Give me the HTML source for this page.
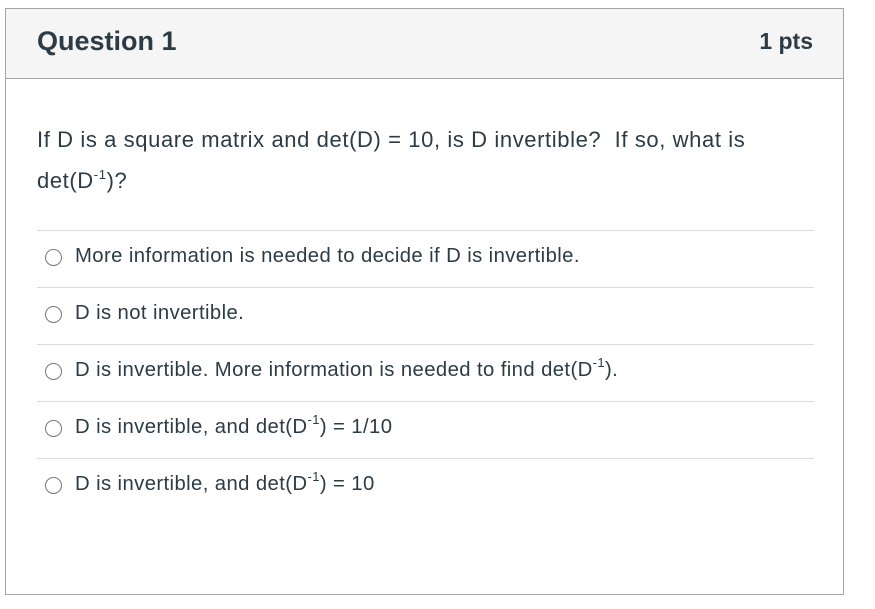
<!DOCTYPE html>
<html><head><style>
body{margin:0;background:#fff;font-family:"Liberation Sans",sans-serif;color:#2d3b45;}
.box{position:absolute;left:5px;top:8px;width:837px;height:585px;border:1px solid #a5a5a5;}
.hdr{position:absolute;left:0;top:0;width:837px;height:69px;background:#f5f5f5;border-bottom:1px solid #a5a5a5;}
.t{position:absolute;left:31px;top:17px;font-size:27px;font-weight:bold;letter-spacing:0px;}
.p{position:absolute;right:30px;top:19px;font-size:23px;font-weight:bold;}
.q{position:absolute;left:31px;top:110px;font-size:22px;line-height:41px;width:760px;letter-spacing:0.6px;}
sup{font-size:13px;vertical-align:9px;line-height:0;}
.opt{position:absolute;left:31px;width:777px;height:57px;border-top:1px solid #dadada;font-size:20.3px;letter-spacing:0.4px;}
.opt .r{position:absolute;left:8px;top:18px;width:17px;height:17px;border:1.5px solid #777;border-radius:50%;box-sizing:border-box;}
.opt span{position:absolute;left:38px;top:14px;}
</style></head><body>
<div class="box">
<div class="hdr"><div class="t">Question 1</div><div class="p">1 pts</div></div>
<div class="q">If D is a square matrix and det(D) = 10, is D invertible?&nbsp; If so, what is det(D<sup>-1</sup>)?</div>
<div class="opt" style="top:221px"><div class="r"></div><span>More information is needed to decide if D is invertible.</span></div>
<div class="opt" style="top:278px"><div class="r"></div><span>D is not invertible.</span></div>
<div class="opt" style="top:335px"><div class="r"></div><span>D is invertible. More information is needed to find det(D<sup>-1</sup>).</span></div>
<div class="opt" style="top:392px"><div class="r"></div><span>D is invertible, and det(D<sup>-1</sup>) = 1/10</span></div>
<div class="opt" style="top:449px"><div class="r"></div><span>D is invertible, and det(D<sup>-1</sup>) = 10</span></div>
</div>
</body></html>
